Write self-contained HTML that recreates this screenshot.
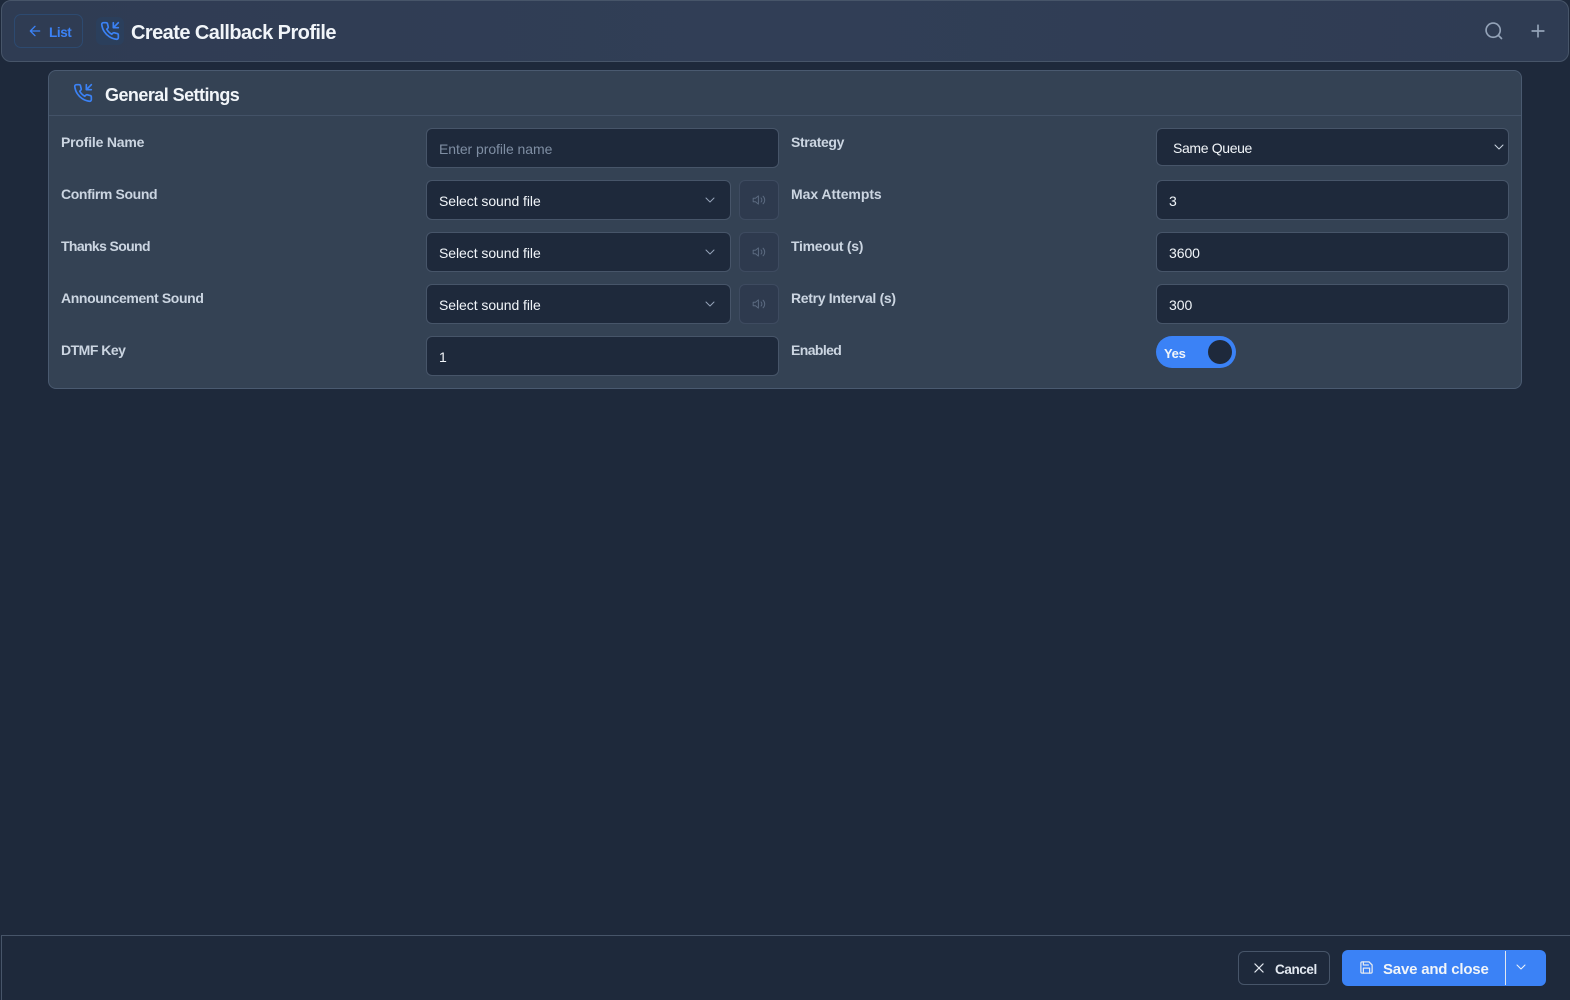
<!DOCTYPE html>
<html lang="en"><head><meta charset="utf-8"><title>Create Callback Profile</title>
<style>
*{box-sizing:border-box;margin:0;padding:0}
html,body{width:1570px;height:1000px;overflow:hidden;background:#1e293b;font-family:"Liberation Sans",sans-serif;color:#f1f5f9}
.a{position:absolute}
.t{position:absolute;white-space:nowrap;line-height:20px}
.hdr{left:1px;top:0;width:1568px;height:62px;border:1px solid #475569;border-radius:10px;background:linear-gradient(90deg,#2f3c53,#313e56 50%,#2f3c53)}
.card{left:48px;top:70px;width:1474px;height:319px;background:#344254;border:1px solid #4a5a70;border-radius:8px}
.sep{left:49px;top:115px;width:1472px;height:1px;background:#435267}
.l{font-size:14px;font-weight:700;color:#cbd5e1;letter-spacing:-.38px}
.f{position:absolute;background:#1e293b;border:1px solid #475569;border-radius:6px;height:40px}
.v{font-size:14px;color:#f1f5f9;letter-spacing:-.06px}
.b{position:absolute;left:739px;width:40px;height:40px;background:#2e3a4e;border:1px solid #3e4b60;border-radius:6px}
svg{position:absolute;fill:none;stroke-linecap:round;stroke-linejoin:round}
</style></head><body>
<div class="a hdr"></div>
<div class="a" style="left:14px;top:14px;width:69px;height:34px;border:1px solid #2d4a70;border-radius:7px"></div>
<svg style="left:27px;top:23px" width="16" height="16" viewBox="0 0 24 24" stroke="#3b82f6" stroke-width="2"><path d="M19 12H5M12 19l-7-7 7-7"/></svg>
<div class="t" style="left:49px;top:23px;font-size:13.5px;font-weight:700;color:#3b82f6;letter-spacing:-.4px">List</div>
<div class="a" style="left:96px;top:17px;width:28px;height:28px;background:#2b3f5c;border-radius:6px"></div>
<svg style="left:100px;top:21px" width="20" height="20" viewBox="0 0 24 24" stroke="#3b82f6" stroke-width="2"><path d="M16 2v6h6M22 2l-6 6"/><path d="M22 16.92v3a2 2 0 0 1-2.18 2 19.79 19.79 0 0 1-8.63-3.07 19.5 19.5 0 0 1-6-6 19.79 19.79 0 0 1-3.07-8.67A2 2 0 0 1 4.11 2h3a2 2 0 0 1 2 1.72 12.84 12.84 0 0 0 .7 2.81 2 2 0 0 1-.45 2.11L8.09 9.91a16 16 0 0 0 6 6l1.27-1.27a2 2 0 0 1 2.11-.45 12.84 12.84 0 0 0 2.81.7A2 2 0 0 1 22 16.92z"/></svg>
<div class="t" style="left:131px;top:23px;font-size:20px;font-weight:700;color:#f1f5f9;letter-spacing:-.56px">Create Callback Profile</div>
<svg style="left:1484px;top:21px" width="20" height="20" viewBox="0 0 24 24" stroke="#94a3b8" stroke-width="2"><circle cx="11" cy="11" r="8.5"/><path d="M21 21l-3.6-3.6"/></svg>
<svg style="left:1528px;top:21px" width="20" height="20" viewBox="0 0 24 24" stroke="#94a3b8" stroke-width="2"><path d="M5 12h14M12 5v14"/></svg>

<div class="a card"></div><div class="a sep"></div>
<svg style="left:73px;top:83px" width="20" height="20" viewBox="0 0 24 24" stroke="#3b82f6" stroke-width="2"><path d="M16 2v6h6M22 2l-6 6"/><path d="M22 16.92v3a2 2 0 0 1-2.18 2 19.79 19.79 0 0 1-8.63-3.07 19.5 19.5 0 0 1-6-6 19.79 19.79 0 0 1-3.07-8.67A2 2 0 0 1 4.11 2h3a2 2 0 0 1 2 1.72 12.84 12.84 0 0 0 .7 2.81 2 2 0 0 1-.45 2.11L8.09 9.91a16 16 0 0 0 6 6l1.27-1.27a2 2 0 0 1 2.11-.45 12.84 12.84 0 0 0 2.81.7A2 2 0 0 1 22 16.92z"/></svg>
<div class="t" style="left:105px;top:85px;font-size:18px;font-weight:700;color:#f1f5f9;letter-spacing:-.55px">General Settings</div>

<div class="t l" style="left:61px;top:132px;letter-spacing:-.2px">Profile Name</div>
<div class="t l" style="left:61px;top:184px">Confirm Sound</div>
<div class="t l" style="left:61px;top:236px;letter-spacing:-.63px">Thanks Sound</div>
<div class="t l" style="left:61px;top:288px">Announcement Sound</div>
<div class="t l" style="left:61px;top:340px;letter-spacing:-.5px">DTMF Key</div>
<div class="t l" style="left:791px;top:132px">Strategy</div>
<div class="t l" style="left:791px;top:184px;letter-spacing:-.05px">Max Attempts</div>
<div class="t l" style="left:791px;top:236px;letter-spacing:-.28px">Timeout (s)</div>
<div class="t l" style="left:791px;top:288px;letter-spacing:-.32px">Retry Interval (s)</div>
<div class="t l" style="left:791px;top:340px;letter-spacing:-.6px">Enabled</div>

<div class="f" style="left:426px;top:128px;width:353px"></div>
<div class="t v" style="left:439px;top:139px;color:#7f8ea3">Enter profile name</div>

<div class="f" style="left:426px;top:180px;width:305px"></div>
<div class="t v" style="left:439px;top:191px">Select sound file</div>
<svg style="left:704px;top:194px" width="12" height="12" viewBox="0 0 24 24" stroke="#94a3b8" stroke-width="2"><path d="M4 8l8 8 8-8"/></svg>
<div class="b" style="top:180px"></div>
<svg style="left:752px;top:193px" width="14" height="14" viewBox="0 0 24 24" stroke="#5b6a80" stroke-width="1.7"><path d="M11 5L6 9H2v6h4l5 4zM15.5 8.5a5 5 0 0 1 0 7M19 5.5a9 9 0 0 1 0 13"/></svg>

<div class="f" style="left:426px;top:232px;width:305px"></div>
<div class="t v" style="left:439px;top:243px">Select sound file</div>
<svg style="left:704px;top:246px" width="12" height="12" viewBox="0 0 24 24" stroke="#94a3b8" stroke-width="2"><path d="M4 8l8 8 8-8"/></svg>
<div class="b" style="top:232px"></div>
<svg style="left:752px;top:245px" width="14" height="14" viewBox="0 0 24 24" stroke="#5b6a80" stroke-width="1.7"><path d="M11 5L6 9H2v6h4l5 4zM15.5 8.5a5 5 0 0 1 0 7M19 5.5a9 9 0 0 1 0 13"/></svg>

<div class="f" style="left:426px;top:284px;width:305px"></div>
<div class="t v" style="left:439px;top:295px">Select sound file</div>
<svg style="left:704px;top:298px" width="12" height="12" viewBox="0 0 24 24" stroke="#94a3b8" stroke-width="2"><path d="M4 8l8 8 8-8"/></svg>
<div class="b" style="top:284px"></div>
<svg style="left:752px;top:297px" width="14" height="14" viewBox="0 0 24 24" stroke="#5b6a80" stroke-width="1.7"><path d="M11 5L6 9H2v6h4l5 4zM15.5 8.5a5 5 0 0 1 0 7M19 5.5a9 9 0 0 1 0 13"/></svg>

<div class="f" style="left:426px;top:336px;width:353px"></div>
<div class="t v" style="left:439px;top:347px">1</div>

<div class="f" style="left:1156px;top:128px;width:353px;height:38px"></div>
<div class="t v" style="left:1173px;top:138px;letter-spacing:-.35px">Same Queue</div>
<svg style="left:1493px;top:141px" width="12" height="12" viewBox="0 0 24 24" stroke="#cbd5e1" stroke-width="2"><path d="M4 8l8 8 8-8"/></svg>

<div class="f" style="left:1156px;top:180px;width:353px"></div>
<div class="t v" style="left:1169px;top:191px">3</div>
<div class="f" style="left:1156px;top:232px;width:353px"></div>
<div class="t v" style="left:1169px;top:243px">3600</div>
<div class="f" style="left:1156px;top:284px;width:353px"></div>
<div class="t v" style="left:1169px;top:295px">300</div>

<div class="a" style="left:1156px;top:336px;width:80px;height:32px;border-radius:16px;background:#3b82f6"></div>
<div class="t" style="left:1164px;top:344px;font-size:13px;font-weight:700;color:#f1f5f9;letter-spacing:-.3px">Yes</div>
<div class="a" style="left:1208px;top:340px;width:24px;height:24px;border-radius:50%;background:#1e293b"></div>

<div class="a" style="left:1px;top:935px;width:1569px;height:65px;border-left:1px solid #475569;border-top:1px solid #475569"></div>
<div class="a" style="left:1238px;top:951px;width:92px;height:34px;border:1px solid #475569;border-radius:6px"></div>
<svg style="left:1252px;top:961px" width="14" height="14" viewBox="0 0 24 24" stroke="#e2e8f0" stroke-width="2"><path d="M5 5l14 14M19 5L5 19"/></svg>
<div class="t" style="left:1275px;top:960px;font-size:13.5px;font-weight:700;color:#e2e8f0;letter-spacing:-.4px">Cancel</div>
<div class="a" style="left:1342px;top:950px;width:204px;height:36px;background:#3b82f6;border-radius:6px"></div>
<div class="a" style="left:1505px;top:951px;width:1px;height:34px;background:#e2e8f0"></div>
<svg style="left:1359px;top:960px" width="15" height="15" viewBox="0 0 24 24" stroke="#e2e8f0" stroke-width="2"><path d="M19 21H5a2 2 0 0 1-2-2V5a2 2 0 0 1 2-2h11l5 5v11a2 2 0 0 1-2 2z"/><path d="M17 21v-8H7v8M7 3v5h8"/></svg>
<div class="t" style="left:1383px;top:960px;font-size:15px;font-weight:700;color:#f1f5f9;letter-spacing:-.2px">Save and close</div>
<svg style="left:1515px;top:961px" width="12" height="12" viewBox="0 0 24 24" stroke="#f1f5f9" stroke-width="2"><path d="M4 8l8 8 8-8"/></svg>
</body></html>
